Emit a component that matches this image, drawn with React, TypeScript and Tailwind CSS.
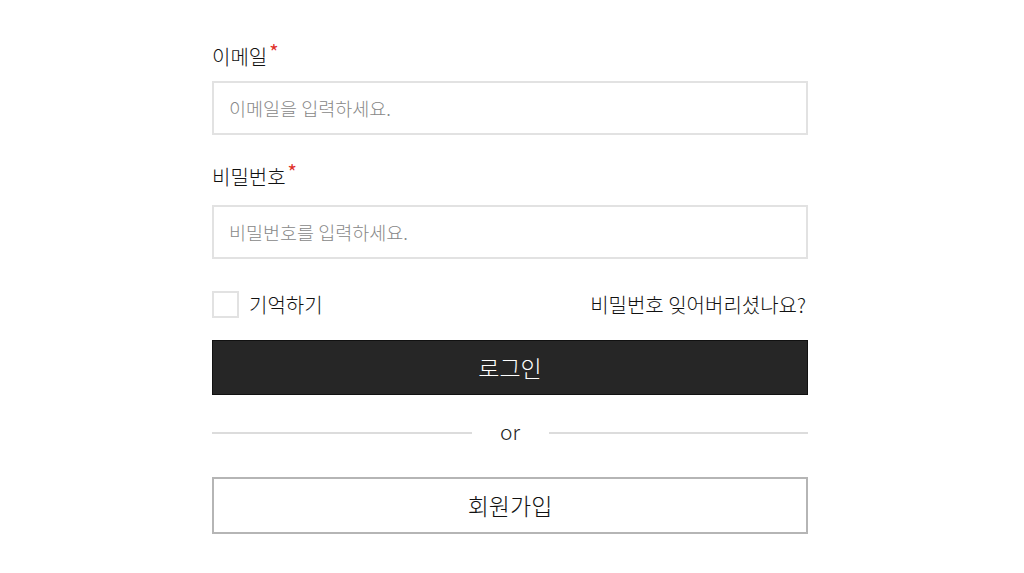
export default function App() {
  const font = { fontFamily: '"Noto Sans CJK KR", "Noto Sans", sans-serif' };
  return (
    <div className="min-h-[573px] bg-white" style={font}>
      <div className="w-[596px] ml-[212px] pt-[42px] text-[#111] font-light">
        <label className="flex items-start text-[20px] leading-[30px]">
          이메일<span className="text-[#e0302a] text-[20px] leading-[20px] ml-[2px] font-normal">*</span>
        </label>
        <input
          className="mt-[9px] block w-full h-[54px] border-2 border-[#e2e2e2] px-[15px] text-[18.5px] font-light outline-none placeholder:text-[#888]"
          placeholder="이메일을 입력하세요."
          style={font}
        />

        <label className="mt-[27px] flex items-start text-[20px] leading-[30px]">
          비밀번호<span className="text-[#e0302a] text-[20px] leading-[20px] ml-[2px] font-normal">*</span>
        </label>
        <input
          type="password"
          className="mt-[13px] block w-full h-[54px] border-2 border-[#e2e2e2] px-[15px] text-[18.5px] font-light outline-none placeholder:text-[#888]"
          placeholder="비밀번호를 입력하세요."
          style={font}
        />

        <div className="mt-[32px] flex items-center justify-between h-[27px]">
          <label className="flex items-center gap-[10px] text-[20px]">
            <span className="w-[27px] h-[27px] border-2 border-[#e2e2e2] bg-white" />
            기억하기
          </label>
          <a className="text-[20px] text-[#111] mr-[2px]">비밀번호 잊어버리셨나요?</a>
        </div>

        <button className="mt-[22px] w-full h-[55px] bg-[#262626] border border-[#111] text-white text-[23px] font-light" style={font}>
          로그인
        </button>

        <div className="mt-[21px] flex items-center h-[30px]">
          <div className="flex-1 h-[2px] mt-[4px] bg-[#dcdcdc]" />
          <span className="w-[77px] text-center text-[21px] text-[#222] leading-[30px]">or</span>
          <div className="flex-1 h-[2px] mt-[4px] bg-[#dcdcdc]" />
        </div>

        <button className="mt-[31px] w-full h-[57px] bg-white border-2 border-[#b5b5b5] text-[#111] text-[23px] font-light" style={font}>
          회원가입
        </button>
      </div>
    </div>
  );
}
